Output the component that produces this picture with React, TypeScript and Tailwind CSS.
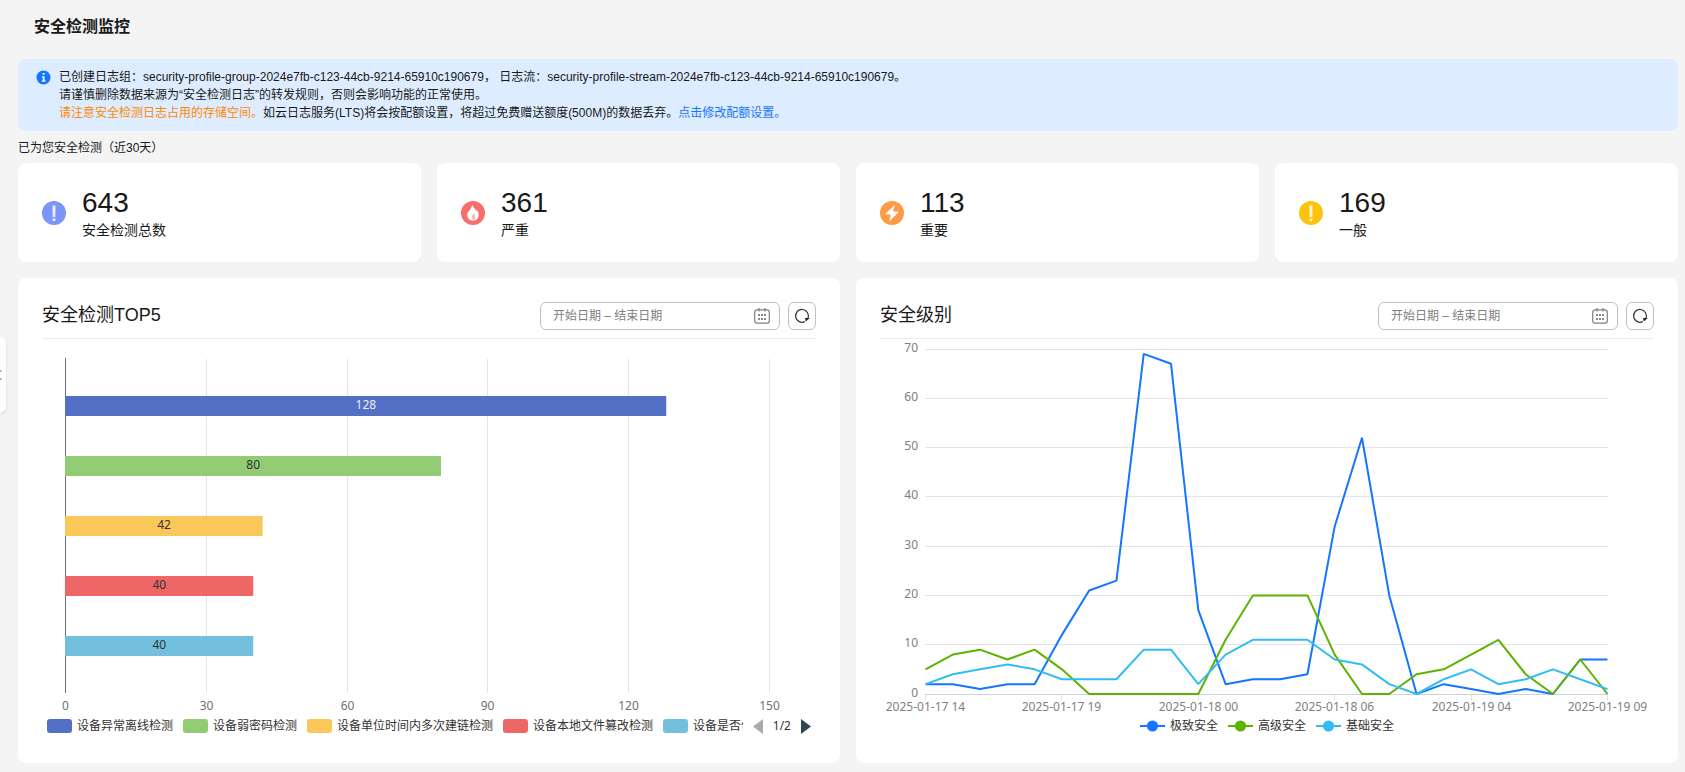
import React from "react";

const stats = [
  { value: 643, label: "安全检测总数", icon: "total" },
  { value: 361, label: "严重", icon: "fire" },
  { value: 113, label: "重要", icon: "bolt" },
  { value: 169, label: "一般", icon: "normal" },
];

const bars = [
  { name: "设备异常离线检测", value: 128, color: "#5470c6" },
  { name: "设备弱密码检测", value: 80, color: "#91cc75" },
  { name: "设备单位时间内多次建链检测", value: 42, color: "#fac858" },
  { name: "设备本地文件篡改检测", value: 40, color: "#ee6666" },
  { name: "设备是否使", value: 40, color: "#73c0de" },
];

const lines = [
  {
    name: "极致安全",
    color: "#1476ff",
    data: [
      2, 2, 1, 2, 2, 12, 21, 23, 69, 67, 17, 2, 3, 3, 4, 34, 52, 20, 0, 2, 1, 0,
      1, 0, 7, 7,
    ],
  },
  {
    name: "高级安全",
    color: "#5cb300",
    data: [
      5, 8, 9, 7, 9, 5, 0, 0, 0, 0, 0, 11, 20, 20, 20, 8, 0, 0, 4, 5, 8, 11, 4,
      0, 7, 0,
    ],
  },
  {
    name: "基础安全",
    color: "#33bcf2",
    data: [
      2, 4, 5, 6, 5, 3, 3, 3, 9, 9, 2, 8, 11, 11, 11, 7, 6, 2, 0, 3, 5, 2, 3, 5,
      3, 1,
    ],
  },
];

const times = [
  "2025-01-17 14",
  "2025-01-17 19",
  "2025-01-18 00",
  "2025-01-18 06",
  "2025-01-19 04",
  "2025-01-19 09",
];

const chartFont = "font-['Noto_Sans','Noto_Sans_CJK_SC',sans-serif]";

function StatIcon({ icon }: { icon: string }) {
  if (icon === "fire") {
    return (
      <svg className="size-6 shrink-0" viewBox="0 0 24 24">
        <circle cx="12" cy="12" r="12" fill="#f76f6b" />
        <path
          d="M11.200 3.600c.7 3 3.200 3.900 4.200 6.600.3-.5.4-1 .4-1.500 1.200 1.600 1.900 3.300 1.900 5.100 0 3.400-2.400 5.900-5.700 5.900s-5.700-2.400-5.700-5.700c0-3.900 4.300-4.900 4.900-10.400z"
          fill="#fff"
        />
        <path
          d="M13.300 10.500c.3 2.300-2.400 3.300-2.400 5.600 0 1.300.8 2.300 1.900 3 1.300-.8 1.900-2.300 1.500-3.700-.3-1.500-1.500-2.700-1-4.900z"
          fill="#fbb9b7"
        />
      </svg>
    );
  }
  if (icon === "bolt") {
    return (
      <svg className="size-6 shrink-0" viewBox="0 0 24 24">
        <circle cx="12" cy="12" r="12" fill="#ff9a44" />
        <path d="M14.800 3.800 5 13.200l5.800.3-1.600 7 9.800-9.700-5.800-.4z" fill="#fff" />
      </svg>
    );
  }
  return (
    <svg className="size-6 shrink-0" viewBox="0 0 24 24">
      <circle cx="12" cy="12" r="12" fill={icon === "total" ? "#7b95f8" : "#fcc40c"} />
      <path
        d="M10.500 4.500h3l-.2 11.500h-2.600zM10.600 17.500h2.800v2.500h-2.800z"
        fill="#fff"
        fillOpacity=".85"
      />
    </svg>
  );
}

function Panel({ title, id, children }: { title: string; id: string; children: React.ReactNode }) {
  return (
    <section className="min-w-0 rounded-lg bg-white px-6 pt-6 pb-[27px]">
      <div className="flex items-start gap-2 border-b border-[#ebebeb] pb-2">
        <h2 className="mr-auto text-[18px] leading-[26px]">{title}</h2>
        <div className="flex h-7 w-60 items-center rounded-md border border-[#c2c2c2] pr-[9px] pl-3">
          <label htmlFor={id} className="sr-only">
            {title}日期
          </label>
          <input
            id={id}
            type="text"
            placeholder="开始日期 – 结束日期"
            className="h-full min-w-0 flex-1 text-xs leading-6 outline-none placeholder:text-[#808080]"
          />
          <svg className="size-4" viewBox="0 0 16 16" fill="none" stroke="#808080">
            <rect x=".7" y="1.800" width="14.600" height="13.400" rx="2.500" strokeWidth="1.200" />
            <path d="M5 0v3.500M11 0v3.500" strokeWidth="1.300" />
            <path
              d="M4 7h2M7 7h2M10 7h2M4 11h2M7 11h2M10 11h2"
              stroke="#666"
              strokeWidth="1.700"
            />
          </svg>
        </div>
        <button
          type="button"
          aria-label="刷新"
          className="flex size-7 items-center justify-center rounded-md border border-[#c2c2c2]"
        >
          <svg className="size-4" viewBox="0 0 16 16" fill="none" stroke="#333">
            <path d="M11 13.500A6.400 6.400 0 1 1 13.800 10.500" strokeWidth="1.200" />
            <path d="M11 10h4.800l-4 3.400z" fill="#222" stroke="none" />
          </svg>
        </button>
      </div>
      {children}
    </section>
  );
}

function BarChart() {
  const scale = 704 / 150;
  return (
    <svg className={`block h-auto w-full text-xs ${chartFont}`} viewBox="0 0 774 377">
      {[0, 30, 60, 90, 120, 150].map((tick) => {
        const x = Math.round(23 + tick * scale) + 0.5;
        return (
          <g key={tick}>
            {tick > 0 && <path d={`M${x} 20V354`} stroke="#e0e6f1" />}
            <text x={x} y="371" textAnchor="middle" fill="#6e7079">
              {tick}
            </text>
          </g>
        );
      })}
      <path d="M23.500 19V354" stroke="#6e7079" />
      {bars.map((bar, i) => (
        <g key={bar.name}>
          <rect x="23" y={57 + i * 60} width={bar.value * scale + 0.5} height="20" fill={bar.color} />
          <text
            x={23.5 + (bar.value * scale) / 2}
            y={70 + i * 60}
            textAnchor="middle"
            fill={i === 0 ? "#eee" : "#333"}
          >
            {bar.value}
          </text>
        </g>
      ))}
    </svg>
  );
}

function LineChart() {
  const px = (i: number) => 45.5 + (i * 682) / 25;
  const py = (v: number) => 355 - (v * 345) / 70;
  return (
    <svg className={`block h-auto w-full text-xs ${chartFont}`} viewBox="0 0 774 377">
      {[0, 10, 20, 30, 40, 50, 60, 70].map((tick) => {
        const y = Math.floor(py(tick)) + 0.5;
        return (
          <g key={tick}>
            <path d={`M45 ${y}H728`} stroke={tick === 0 ? "#c9d3de" : "#e0e6f1"} />
            <text x="38" y={y + 2} textAnchor="end" fill="#808080">
              {tick}
            </text>
          </g>
        );
      })}
      {times.map((time, i) => {
        const x = Math.floor(px(i * 5)) + 0.5;
        return (
          <g key={time}>
            <path d={`M${x} 356v5`} stroke="#dfe1e6" />
            <text x={x} y="372" textAnchor="middle" fill="#808080">
              {time}
            </text>
          </g>
        );
      })}
      {lines.map((line) => (
        <polyline
          key={line.name}
          points={line.data.map((v, i) => `${px(i)},${py(v)}`).join(" ")}
          fill="none"
          stroke={line.color}
          strokeWidth="2"
          strokeLinejoin="bevel"
        />
      ))}
    </svg>
  );
}

export default function App() {
  return (
    <div className="relative min-h-screen bg-[#f4f4f4] pr-[7px] pb-[9px] pl-[18px] font-['Liberation_Sans','Noto_Sans_CJK_SC',sans-serif] text-[#191919]">
      {/* side menu handle */}
      <button
        type="button"
        aria-label="展开菜单"
        className="absolute top-[337px] left-0 h-[76px] w-[6px] overflow-hidden rounded-r-lg bg-white shadow"
      >
        <svg className="h-3 w-1" viewBox="0 0 4 12" fill="none" stroke="#666">
          <path d="M1.500 1 -3 6l4.500 5" />
        </svg>
      </button>

      <h1 className="px-4 pt-[17px] pb-[22px] text-base leading-5 font-bold">安全检测监控</h1>

      {/* notice */}
      <div className="flex gap-2 rounded-lg bg-[#deecff] py-[9px] pl-[18px] text-xs leading-[18px]">
        <svg className="mt-[2px] size-[15px] shrink-0" viewBox="0 0 15 15">
          <circle cx="7.500" cy="7.500" r="7" fill="#1476ff" />
          <path d="M6.700 3h1.800v1.800H6.700zM6 6.200h2.500v4.300h1v1.200H5.800v-1.200h1V7.400H6z" fill="#fff" />
        </svg>
        <div>
          <p>
            已创建日志组：security-profile-group-2024e7fb-c123-44cb-9214-65910c190679，
            日志流：security-profile-stream-2024e7fb-c123-44cb-9214-65910c190679。
          </p>
          <p>请谨慎删除数据来源为“安全检测日志”的转发规则，否则会影响功能的正常使用。</p>
          <p>
            <span className="text-[#ff8800]">请注意安全检测日志占用的存储空间。</span>
            如云日志服务(LTS)将会按配额设置，将超过免费赠送额度(500M)的数据丢弃。
            <a href="#" className="text-[#1476ff]">
              点击修改配额设置。
            </a>
          </p>
        </div>
      </div>

      <p className="pt-[2px] text-xs leading-[30px]">已为您安全检测（近30天）</p>

      {/* statistics */}
      <div className="grid grid-cols-4 gap-4">
        {stats.map((stat) => (
          <div key={stat.label} className="flex h-[99px] items-center gap-4 rounded-lg bg-white px-6">
            <StatIcon icon={stat.icon} />
            <div>
              <p className="text-[28px] leading-[34px]">{stat.value}</p>
              <p className="text-sm leading-5">{stat.label}</p>
            </div>
          </div>
        ))}
      </div>

      {/* charts */}
      <div className="mt-4 grid grid-cols-2 gap-4">
        <Panel title="安全检测TOP5" id="top-date">
          <BarChart />
          <div className={`flex h-5 items-center pr-[5px] pl-[5px] text-xs text-[#333] ${chartFont}`}>
            <ul className="flex min-w-0 flex-1 gap-[10px] overflow-hidden">
              {bars.map((bar) => (
                <li key={bar.name} className="flex shrink-0 items-center gap-[5px] whitespace-nowrap">
                  <span
                    className="h-[14px] w-[25px] rounded-[3px]"
                    style={{ backgroundColor: bar.color }}
                  />
                  {bar.name}
                </li>
              ))}
            </ul>
            <div className="flex items-center gap-[10px] pl-[10px]">
              <button type="button" aria-label="上一页" disabled>
                <svg className="h-[15px] w-[10px]" viewBox="0 0 10 15">
                  <path d="M10 0v15L0 7.500z" fill="#aaa" />
                </svg>
              </button>
              <span>1/2</span>
              <button type="button" aria-label="下一页">
                <svg className="h-[15px] w-[10px]" viewBox="0 0 10 15">
                  <path d="M0 0v15l10-7.500z" fill="#2f4554" />
                </svg>
              </button>
            </div>
          </div>
        </Panel>
        <Panel title="安全级别" id="level-date">
          <LineChart />
          <ul className={`flex h-5 items-center justify-center gap-[10px] text-xs text-[#333] ${chartFont}`}>
            {lines.map((line) => (
              <li key={line.name} className="flex items-center gap-[5px]">
                <svg className="h-[14px] w-[25px]" viewBox="0 0 25 14">
                  <path d="M0 7h25" stroke={line.color} strokeWidth="2" />
                  <circle cx="12.500" cy="7" r="5.600" fill={line.color} />
                </svg>
                {line.name}
              </li>
            ))}
          </ul>
        </Panel>
      </div>
    </div>
  );
}
